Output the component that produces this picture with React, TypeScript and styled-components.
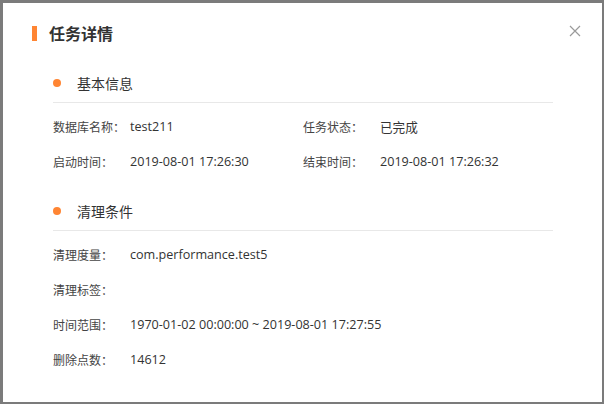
import styled, { createGlobalStyle } from "styled-components";

const GlobalStyle = createGlobalStyle`
  html, body {
    margin: 0;
    padding: 0;
    background: #7b7b7b;
  }
  * {
    box-sizing: border-box;
  }
`;

const Overlay = styled.div`
  width: 604px;
  height: 404px;
  padding: 3px 2px 2px 3px;
  background: #7b7b7b;
  font-family: "Open Sans", "Noto Sans CJK SC", sans-serif;
  color: #333;
`;

const Modal = styled.div`
  position: relative;
  height: 100%;
  background: #fff;
  padding: 19px 49px 0 29px;
`;

const Header = styled.div`
  display: flex;
  align-items: center;
  height: 22px;
`;

const Bar = styled.span`
  width: 5px;
  height: 15px;
  background: #ff8533;
  margin-right: 12px;
`;

const Title = styled.h2`
  margin: 0;
  font-size: 16px;
  font-weight: 700;
  line-height: 22px;
  font-family: "Noto Sans CJK SC", sans-serif;
  color: #333;
`;

const Close = styled.button`
  position: absolute;
  top: 21px;
  right: 20px;
  width: 14px;
  height: 14px;
  padding: 0;
  border: 0;
  background: transparent;
  cursor: pointer;
  svg {
    display: block;
  }
`;

const Body = styled.div`
  padding: 20px 0 0 21px;
`;

const Section = styled.section<{ gap?: number }>`
  margin-top: ${(p) => p.gap ?? 0}px;
`;

const SectionHead = styled.div`
  display: flex;
  align-items: center;
  height: 39px;
  border-bottom: 1px solid #e8e8e8;
  font-family: "Noto Sans CJK SC", sans-serif;
  font-size: 14px;
  color: #333;
`;

const Dot = styled.span`
  width: 8px;
  height: 8px;
  border-radius: 50%;
  background: #ff8533;
  margin: 0 16px 0 0;
`;

const Grid = styled.div`
  display: grid;
  grid-template-columns: 250px 250px;
  grid-auto-rows: 35px;
  padding-top: 6px;
`;

const Field = styled.div<{ wide?: boolean }>`
  display: flex;
  align-items: center;
  font-size: 12px;
  grid-column: ${(p) => (p.wide ? "1 / -1" : "auto")};
`;

const Label = styled.span`
  width: 77px;
  flex-shrink: 0;
  color: #444;
  font-family: "Noto Sans CJK SC", sans-serif;
`;

const Value = styled.span`
  color: #333;
  font-size: 12.6px;
  white-space: nowrap;
`;

const basic = [
  ["数据库名称：", "test211"],
  ["任务状态：", "已完成"],
  ["启动时间：", "2019-08-01 17:26:30"],
  ["结束时间：", "2019-08-01 17:26:32"],
];

const clean = [
  ["清理度量：", "com.performance.test5"],
  ["清理标签：", ""],
  ["时间范围：", "1970-01-02 00:00:00 ~ 2019-08-01 17:27:55"],
  ["删除点数：", "14612"],
];

export default function App() {
  return (
    <>
      <GlobalStyle />
      <Overlay>
        <Modal>
          <Header>
            <Bar />
            <Title>任务详情</Title>
          </Header>
          <Close aria-label="close">
            <svg width="14" height="14" viewBox="0 0 14 14">
              <path
                d="M2 2 L12 12 M12 2 L2 12"
                stroke="#9a9a9a"
                strokeWidth="1.2"
                fill="none"
              />
            </svg>
          </Close>
          <Body>
            <Section>
              <SectionHead>
                <Dot />
                基本信息
              </SectionHead>
              <Grid>
                {basic.map(([k, v]) => (
                  <Field key={k}>
                    <Label>{k}</Label>
                    <Value>{v}</Value>
                  </Field>
                ))}
              </Grid>
            </Section>
            <Section gap={13}>
              <SectionHead>
                <Dot />
                清理条件
              </SectionHead>
              <Grid>
                {clean.map(([k, v]) => (
                  <Field key={k} wide>
                    <Label>{k}</Label>
                    <Value>{v}</Value>
                  </Field>
                ))}
              </Grid>
            </Section>
          </Body>
        </Modal>
      </Overlay>
    </>
  );
}
